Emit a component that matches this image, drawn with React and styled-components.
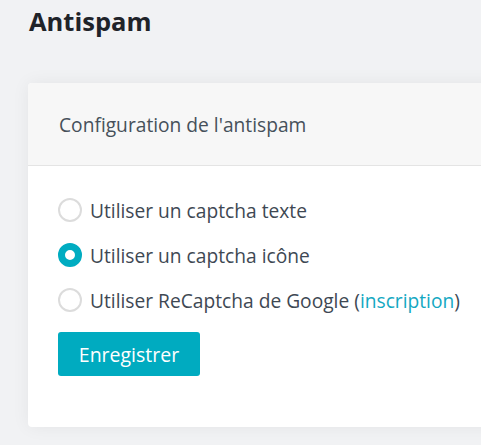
import React, { useState } from "react";
import styled, { createGlobalStyle } from "styled-components";

const GlobalStyle = createGlobalStyle`
  html, body {
    margin: 0;
    padding: 0;
    background: #f1f2f4;
    font-family: "Open Sans", "Noto Sans", sans-serif;
  }
`;

const Page = styled.div`
  padding: 4px 0 0 28px;
  width: 481px;
  height: 445px;
  box-sizing: border-box;
  overflow: hidden;
`;

const Title = styled.h1`
  margin: 0 0 44px 1px;
  font-size: 25.5px;
  font-weight: 700;
  color: #1f2329;
  line-height: 35px;
`;

const Card = styled.div`
  width: 500px;
  background: #fff;
  border-radius: 4px;
  box-shadow: 0 0 18px rgba(0, 0, 0, 0.06);
  overflow: hidden;
`;

const CardHeader = styled.div`
  background: #f7f7f7;
  border-bottom: 1px solid #e4e4e4;
  height: 82px;
  padding: 0 31px;
  display: flex;
  align-items: center;
  font-size: 19.2px;
  color: #46505a;
`;

const CardBody = styled.div`
  padding: 32px 30px 51px 30px;
  display: flex;
  flex-direction: column;
`;

const Options = styled.div`
  display: flex;
  flex-direction: column;
  gap: 21px;
  margin-bottom: 20px;
`;

const Option = styled.label`
  display: flex;
  align-items: center;
  gap: 8px;
  font-size: 19.2px;
  color: #3e4853;
  cursor: pointer;
  height: 24px;
  white-space: nowrap;
`;

const Radio = styled.span`
  width: 24px;
  height: 24px;
  box-sizing: border-box;
  border-radius: 50%;
  flex-shrink: 0;
  border: ${(p) => (p.checked ? "7px solid #00acc1" : "2px solid #dcdcdc")};
  background: #fff;
`;

const Link = styled.a`
  color: #14a8c2;
  text-decoration: none;
`;

const Button = styled.button`
  align-self: flex-start;
  background: #00abc0;
  color: #fff;
  border: none;
  border-radius: 3px;
  font-family: inherit;
  font-size: 19.5px;
  height: 44px;
  width: 142px;
  padding: 0;
  cursor: pointer;
`;

const options = [
  { id: "text", label: "Utiliser un captcha texte" },
  { id: "icon", label: "Utiliser un captcha icône" },
  { id: "recaptcha", label: "Utiliser ReCaptcha de Google", link: true },
];

export default function App() {
  const [value, setValue] = useState("icon");
  return (
    <Page>
      <GlobalStyle />
      <Title>Antispam</Title>
      <Card>
        <CardHeader>Configuration de l'antispam</CardHeader>
        <CardBody>
          <Options>
            {options.map((o) => (
              <Option key={o.id} onClick={() => setValue(o.id)}>
                <Radio checked={value === o.id} />
                <span>
                  {o.label}
                  {o.link && (
                    <>
                      {" ("}
                      <Link href="#">inscription</Link>
                      {")"}
                    </>
                  )}
                </span>
              </Option>
            ))}
          </Options>
          <Button>Enregistrer</Button>
        </CardBody>
      </Card>
    </Page>
  );
}
